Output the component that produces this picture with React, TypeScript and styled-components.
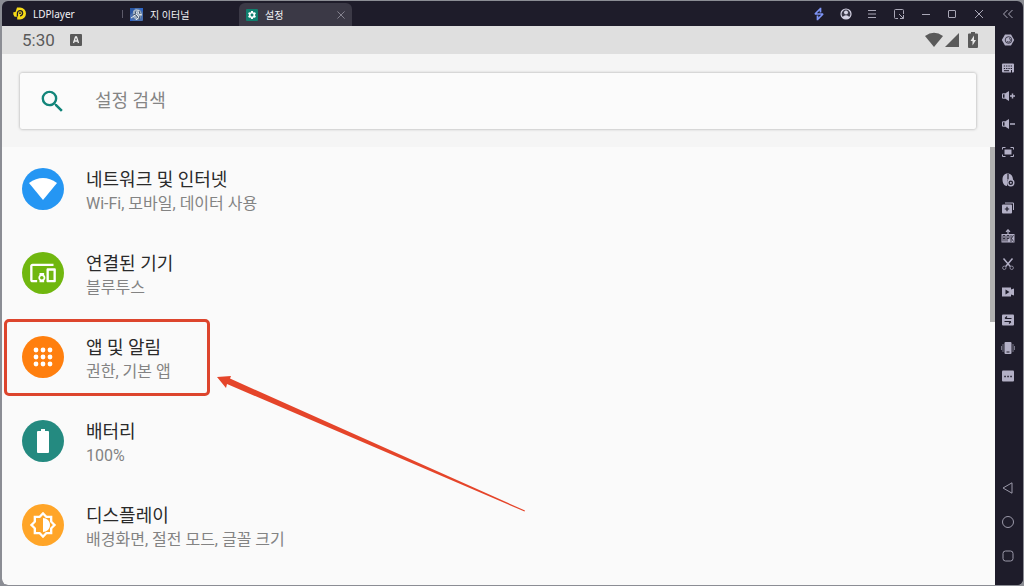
import React from "react";
import styled, { createGlobalStyle } from "styled-components";
import { MdDevicesOther, MdOutlineBrightnessMedium, MdSearch, MdSettings } from "react-icons/md";

const GlobalStyle = createGlobalStyle`
  *, *::before, *::after { box-sizing: border-box; }
  body {
    margin: 0;
    background: #8b8d94;
    font-family: Roboto, "Noto Sans CJK KR", sans-serif;
  }
  button { border: 0; padding: 0; background: none; font: inherit; color: inherit; cursor: pointer; }
  svg { display: block; flex: none; }
`;

const Page = styled.div`
  min-height: 100vh;
  padding: 1px 1px 1px 2px;
  display: flex;
`;

const Window = styled.div`
  flex: 1;
  display: flex;
  flex-direction: column;
  background: #1e1c2a;
  border-radius: 6px;
  overflow: hidden;
`;

const TitleBar = styled.header`
  height: 25px;
  display: flex;
  align-items: stretch;
  color: #f2f2f5;
  font-family: "Noto Sans", "Noto Sans CJK KR", sans-serif;
  font-size: 10px;
  line-height: 16px;
`;

const Brand = styled.div`
  width: 120px;
  padding-left: 11px;
  display: flex;
  align-items: center;
  gap: 7px;
`;

const Tabs = styled.nav`
  display: flex;
  align-items: stretch;
`;

const Tab = styled.div<{ $active?: boolean }>`
  width: ${(p) => (p.$active ? 113 : 116)}px;
  margin-top: 2px;
  padding: 0 6px 0 7px;
  display: flex;
  align-items: center;
  background: ${(p) => (p.$active ? "#3b3946" : "transparent")};
  border-radius: 6px 6px 0 0;
`;

const TabButton = styled.button`
  flex: 1;
  display: flex;
  align-items: center;
  gap: 7px;
  text-align: left;
`;

const Divider = styled.span`
  width: 1px;
  height: 8px;
  align-self: center;
  background: #5c5a69;
`;

const Spacer = styled.div`
  flex: 1;
`;

const WindowControls = styled.div`
  width: 186px;
  display: grid;
  grid-template-columns: repeat(7, 1fr);
  color: #a9a7b6;
`;

const IconButton = styled.button`
  display: flex;
  align-items: center;
  justify-content: center;
`;

const CollapseButton = styled(IconButton)`
  width: 31px;
  color: #a9a7b6;
`;

const Body = styled.div`
  flex: 1;
  display: flex;
`;

const Screen = styled.main`
  flex: 1;
  display: flex;
  flex-direction: column;
  background: #fafafa;
  min-width: 0;
`;

const StatusBar = styled.div`
  height: 28px;
  padding: 0 17px 0 20px;
  display: flex;
  align-items: center;
  background: #dfdfdf;
  color: #5a5a5a;
`;

const Clock = styled.time`
  font-size: 17px;
  line-height: 20px;
  margin-right: 15px;
`;

const StatusIcons = styled.div`
  margin-left: auto;
  display: flex;
  align-items: center;
`;

const SearchHeader = styled.div`
  padding: 19px 19px 18px 18px;
  background: #f5f5f5;
`;

const SearchBox = styled.label`
  height: 56px;
  padding: 0 18px;
  display: flex;
  align-items: center;
  gap: 28px;
  background: #fbfbfb;
  border-radius: 2px;
  box-shadow: 0 0 3px rgba(0, 0, 0, 0.35);
  color: #12857a;
`;

const SearchInput = styled.input`
  flex: 1;
  min-width: 0;
  border: 0;
  padding: 0;
  outline: 0;
  background: none;
  font: inherit;
  font-size: 18px;
  line-height: 28px;
  color: #212121;
  &::placeholder { color: #858585; opacity: 1; }
`;

const ListArea = styled.div`
  flex: 1;
  display: grid;
  grid-template-columns: minmax(0, 1fr) 5px;
`;

const List = styled.ul`
  margin: 0;
  padding: 0;
  list-style: none;
`;

const Item = styled.li`
  position: relative;
`;

const Row = styled.button`
  width: 100%;
  height: 84px;
  padding: 0 20px;
  display: flex;
  align-items: center;
  gap: 22px;
  text-align: left;
`;

const Disc = styled.span<{ $color: string }>`
  width: 42px;
  height: 42px;
  display: flex;
  align-items: center;
  justify-content: center;
  border-radius: 50%;
  background: ${(p) => p.$color};
  color: #fff;
`;

const Labels = styled.span`
  padding-top: 5px;
  display: flex;
  flex-direction: column;
`;

const Title = styled.span`
  font-size: 18px;
  line-height: 24px;
  color: #2a2a2a;
`;

const Summary = styled.span`
  font-size: 16px;
  line-height: 24px;
  color: #838383;
`;

const ScrollThumb = styled.div`
  height: 40%;
  background: #b1b1b1;
`;

const Highlight = styled.div`
  position: absolute;
  left: 2px;
  top: 4px;
  width: 206px;
  height: 77px;
  border: 3px solid #dd452d;
  border-radius: 5px;
  pointer-events: none;
`;

const Arrow = styled.svg`
  position: absolute;
  left: 214px;
  top: 60px;
  pointer-events: none;
`;

const ToolRail = styled.aside`
  width: 28px;
  padding: 0 2px 12px 0;
  display: flex;
  flex-direction: column;
  background: #1e1c2a;
  color: #b3b0c6;
`;

const Tool = styled(IconButton)`
  height: 28px;
`;

const NavTool = styled(IconButton)`
  height: 34px;
  color: #9b99a9;
`;

const Icon = ({ size = 14, children }: { size?: number; children: React.ReactNode }) => (
  <svg width={size} height={size} viewBox="0 0 14 14" fill="none" stroke="currentColor" aria-hidden="true">
    {children}
  </svg>
);

const Logo = () => (
  <svg width="13" height="13" viewBox="0 0 13 13" aria-hidden="true">
    <path d="M4 .5h3a6 6 0 0 1 0 12H4.2V9.8H1.6L.3 7.4V5.2L2.5 5Z" fill="#f6da17" />
    <path d="M4.4 9.6V6.2a2.6 2.6 0 1 1 2.6 2.6" fill="none" stroke="#1e1c2a" strokeWidth="1.3" />
    <circle cx="7" cy="6.2" r=".9" fill="#1e1c2a" />
  </svg>
);

const GameArt = () => (
  <svg width="13" height="13" viewBox="0 0 13 13" aria-hidden="true">
    <rect width="13" height="13" rx="1" fill="#496fae" />
    <path d="M0 0h5L3 4 0 7Z" fill="#2856a5" />
    <path d="m3 3 3-2 4 1 2 4-2 5-4 1-3-3Z" fill="#9caec2" />
    <path d="m4 3 3 2-3 3m4-6 1 4 3 1M6 6l3 3-3 3M1 10l3-2" fill="none" stroke="#e2e7ea" />
    <path d="m5 3 1 3-3 1m6-4 1 3m-4 1 2 3m2-2-1 4" fill="none" stroke="#40536f" />
    <path d="M9 0h4v4ZM0 10l3 3H0Z" fill="#2c65c8" />
  </svg>
);

const SettingsBadge = styled.span`
  width: 12px;
  height: 12px;
  display: flex;
  align-items: center;
  justify-content: center;
  border-radius: 1px;
  background: #10806f;
  color: #fff;
`;

const windowControls = [
  { label: "부스트", icon: <path d="M8.5.8v4.7M8.500 1.500 3 7h8L5.500 12.500M5.500 13.200V8.500" stroke="#7d93f5" strokeWidth="1.7" strokeLinejoin="bevel" /> },
  { label: "계정", icon: <><circle cx="7" cy="7" r="5" fill="#3a3848" stroke="#d5d3e4" strokeWidth="1.2" /><circle cx="7" cy="5.5" r="2" fill="#d5d3e4" stroke="none" /><path d="M3.3 10.2Q7 6.500 10.700 10.200 7 13.600 3.300 10.200Z" fill="#d5d3e4" stroke="none" /></> },
  { label: "메뉴", icon: <path d="M3 3.5h8M3 7h8M3 10.5h8" /> },
  { label: "창 크기", icon: <path d="M6 11.500H3.500a1 1 0 0 1-1-1v-7a1 1 0 0 1 1-1h7a1 1 0 0 1 1 1V7M7 7l4.500 4.500M11.500 8v3.500H8" /> },
  { label: "최소화", icon: <path d="M3 7.5h8" /> },
  { label: "최대화", icon: <rect x="3.5" y="3.5" width="7" height="7" rx=".5" /> },
  { label: "닫기", icon: <path d="m3 3 8 8M11 3l-8 8" /> },
];

const speaker = (
  <>
    <path d="M1.5 4.8H4v4.4H1.5Z" />
    <path d="M4 4.5 8 2v10L4 9.5Z" fill="currentColor" stroke="none" />
  </>
);

const tools = [
  { label: "설정", icon: <><path d="M4 1.5h6L13.2 7 10 12.5H4L.8 7Z" fill="currentColor" stroke="none" /><circle cx="7.5" cy="7" r="3.3" stroke="#3b394b" /><path d="M8 5.500a1.800 1.800 0 1 1-2 2.500" stroke="#3b394b" /></> },
  { label: "키보드", icon: <><rect x="1" y="2.5" width="12" height="9" rx="1" fill="currentColor" stroke="none" /><path d="M2.800 5h8.600M2.800 7.500h8.600" stroke="#1e1c2a" strokeDasharray="1.300 1" /><path d="M3 9.700h5M10.500 9v3" stroke="#1e1c2a" /></> },
  { label: "볼륨 높이기", icon: <>{speaker}<path d="M9 7h5M11.5 4.5v5" strokeWidth="1.5" /></> },
  { label: "볼륨 낮추기", icon: <>{speaker}<path d="M9 7h5" strokeWidth="1.5" /></> },
  { label: "전체 화면", icon: <><path d="M1.500 4.500v-2h3M9.500 2.500h3v2M12.500 9.500v2h-3M4.500 11.500h-3v-2" /><rect x="3.500" y="4.500" width="7" height="5" fill="currentColor" stroke="none" /></> },
  { label: "마우스", icon: <><path d="M6.500.5C3.300.5 1.500 3 1.500 6.500s1.500 6.500 4.500 6.500L6.500 7H12C12 3 10 .5 6.500.5Z" fill="currentColor" stroke="none" /><path d="M7 1v5.500" stroke="#1e1c2a" strokeWidth="1.200" /><circle cx="9.800" cy="9.800" r="3" fill="#1e1c2a" strokeWidth="1.400" /><circle cx="9.800" cy="9.800" r="1" fill="currentColor" stroke="none" /></> },
  { label: "다중 실행", icon: <><path d="M4 2h8.500v7" /><rect x="1" y="3.500" width="10" height="9" rx="1" fill="currentColor" stroke="none" /><path d="M3.800 8h4.400M6 5.800v4.400" stroke="#1e1c2a" strokeWidth="1.200" /></> },
  { label: "APK 설치", icon: <><path d="M7 5V1M5 2.800 7 .8l2 2" strokeWidth="1.200" /><rect x=".5" y="5" width="13" height="8.500" fill="currentColor" stroke="none" /><path d="M2 12.500V6.500h2v6M2 9.500h2M6 12.500v-6h2v3H6M10 6v7M12.500 6 10.500 9.500l2 3" stroke="#1e1c2a" strokeWidth=".8" /></> },
  { label: "캡처", icon: <><path d="m2.500 1.500 6.800 8M11.500 1.500l-6.800 8" strokeWidth="1.500" /><circle cx="3.300" cy="10.800" r="1.700" opacity=".7" /><circle cx="10.700" cy="10.800" r="1.700" opacity=".7" /></> },
  { label: "녹화", icon: <><path d="M1 2.500h9v2l3-1v7l-3-1v2H1Z" fill="currentColor" stroke="none" /><path d="m4.500 4.500 4 2.500-4 2.500Z" fill="#1e1c2a" stroke="none" /></> },
  { label: "동기화", icon: <><rect x="1" y="1.500" width="12" height="11" rx="1" fill="currentColor" stroke="none" /><path d="M4 5.500h6.500M6 3.500l-2 2M10 8.500H3.500M8 10.500l2-2" stroke="#1e1c2a" strokeWidth="1.200" /></> },
  { label: "흔들기", icon: <><rect x="3.500" y="1" width="7" height="12" rx="1" fill="currentColor" stroke="none" /><path d="M5.500 11h3" stroke="#1e1c2a" /><path d="M2 3v8M12 3v8M.5 5v4M13.500 5v4" opacity=".6" /></> },
  { label: "더 보기", icon: <><rect x="1" y="1.500" width="12" height="11" rx="1" fill="currentColor" stroke="none" /><path d="M3.300 7.500h8" stroke="#1e1c2a" strokeWidth="1.500" strokeDasharray="1.500 1.500" /></> },
];

const navTools = [
  { label: "뒤로", icon: <path d="M11 1.800v10.400L2 7Z" strokeLinejoin="round" /> },
  { label: "홈", icon: <circle cx="7" cy="7" r="5.500" /> },
  { label: "최근 앱", icon: <rect x="2" y="2" width="10" height="10" rx="2.500" /> },
];

const settings = [
  {
    title: "네트워크 및 인터넷",
    summary: "Wi-Fi, 모바일, 데이터 사용",
    color: "#2596f3",
    icon: <svg width="28" height="24" viewBox="0 0 28 24"><path d="M0 6Q14-4 28 6L14 23Z" fill="#fff" /></svg>,
  },
  { title: "연결된 기기", summary: "블루투스", color: "#70b70f", icon: <MdDevicesOther size={28} /> },
  {
    title: "앱 및 알림",
    summary: "권한, 기본 앱",
    color: "#ff7f0e",
    marked: true,
    icon: (
      <svg width="20" height="20" viewBox="0 0 20 20" fill="#fff">
        {[3, 10, 17].map((y) => [3, 10, 17].map((x) => <circle key={`${x}-${y}`} cx={x} cy={y} r="2.4" />))}
      </svg>
    ),
  },
  {
    title: "배터리",
    summary: "100%",
    color: "#248a80",
    icon: <svg width="12" height="24" viewBox="0 0 12 24"><path d="M4 0h4v2h3q1 0 1 1v20q0 1-1 1H1q-1 0-1-1V3q0-1 1-1h3Z" fill="#fff" /></svg>,
  },
  {
    title: "디스플레이",
    summary: "배경화면, 절전 모드, 글꼴 크기",
    color: "#ffa528",
    icon: <MdOutlineBrightnessMedium size={28} />,
  },
];

export default function App() {
  return (
    <>
      <GlobalStyle />
      <Page>
        <Window>
          <TitleBar>
            <Brand><Logo />LDPlayer</Brand>
            <Divider />
            <Tabs>
              <Tab><TabButton><GameArt />지 이터널</TabButton></Tab>
              <Tab $active>
                <TabButton><SettingsBadge><MdSettings size={10} /></SettingsBadge>설정</TabButton>
                <IconButton aria-label="탭 닫기"><Icon size={10}><path d="m2 2 10 10M12 2 2 12" stroke="#85838f" strokeWidth="1.4" /></Icon></IconButton>
              </Tab>
            </Tabs>
            <Spacer />
            <WindowControls>
              {windowControls.map((c) => (
                <IconButton key={c.label} aria-label={c.label}><Icon>{c.icon}</Icon></IconButton>
              ))}
            </WindowControls>
            <CollapseButton aria-label="도구 모음 접기">
              <Icon><path d="M6.5 3 2.5 7l4 4M11.5 3l-4 4 4 4" /></Icon>
            </CollapseButton>
          </TitleBar>
          <Body>
            <Screen>
              <StatusBar>
                <Clock>5:30</Clock>
                <svg width="12" height="12" viewBox="0 0 12 12" aria-hidden="true">
                  <rect width="12" height="12" rx="1" fill="#5a5a5a" />
                  <path d="m3.5 9 2-6h1l2 6M4.3 7h3.4" fill="none" stroke="#eee" strokeWidth="1.3" />
                </svg>
                <StatusIcons>
                  <svg width="53" height="16" viewBox="0 0 53 16" fill="#5a5a5a" aria-hidden="true">
                    <path d="M0 4Q9-2.5 18 4L9 15Z" />
                    <path d="M34 1v14H20Z" />
                    <path d="M46 0h4v1.5h2q1 0 1 1V15q0 1-1 1h-8q-1 0-1-1V2.5q0-1 1-1h2Z" />
                    <path d="M49 3.5 45.5 9h2v4.5L51 8h-2Z" fill="#e8e8e8" />
                  </svg>
                </StatusIcons>
              </StatusBar>
              <SearchHeader>
                <SearchBox>
                  <MdSearch size={29} />
                  <SearchInput type="text" placeholder="설정 검색" aria-label="설정 검색" />
                </SearchBox>
              </SearchHeader>
              <ListArea>
                <List>
                  {settings.map((s) => (
                    <Item key={s.title}>
                      <Row>
                        <Disc $color={s.color}>{s.icon}</Disc>
                        <Labels>
                          <Title>{s.title}</Title>
                          <Summary>{s.summary}</Summary>
                        </Labels>
                      </Row>
                      {s.marked && (
                        <>
                          <Highlight />
                          <Arrow width="312" height="140" viewBox="0 0 312 140" aria-hidden="true">
                            <path d="M1 2 15 1l-1 2.5L309 135.500 308.500 136.500 11 9l-1 4Z" fill="#e5452a" />
                          </Arrow>
                        </>
                      )}
                    </Item>
                  ))}
                </List>
                <ScrollThumb />
              </ListArea>
            </Screen>
            <ToolRail>
              {tools.map((t) => (
                <Tool key={t.label} aria-label={t.label}><Icon>{t.icon}</Icon></Tool>
              ))}
              <Spacer />
              {navTools.map((t) => (
                <NavTool key={t.label} aria-label={t.label}><Icon>{t.icon}</Icon></NavTool>
              ))}
            </ToolRail>
          </Body>
        </Window>
      </Page>
    </>
  );
}
